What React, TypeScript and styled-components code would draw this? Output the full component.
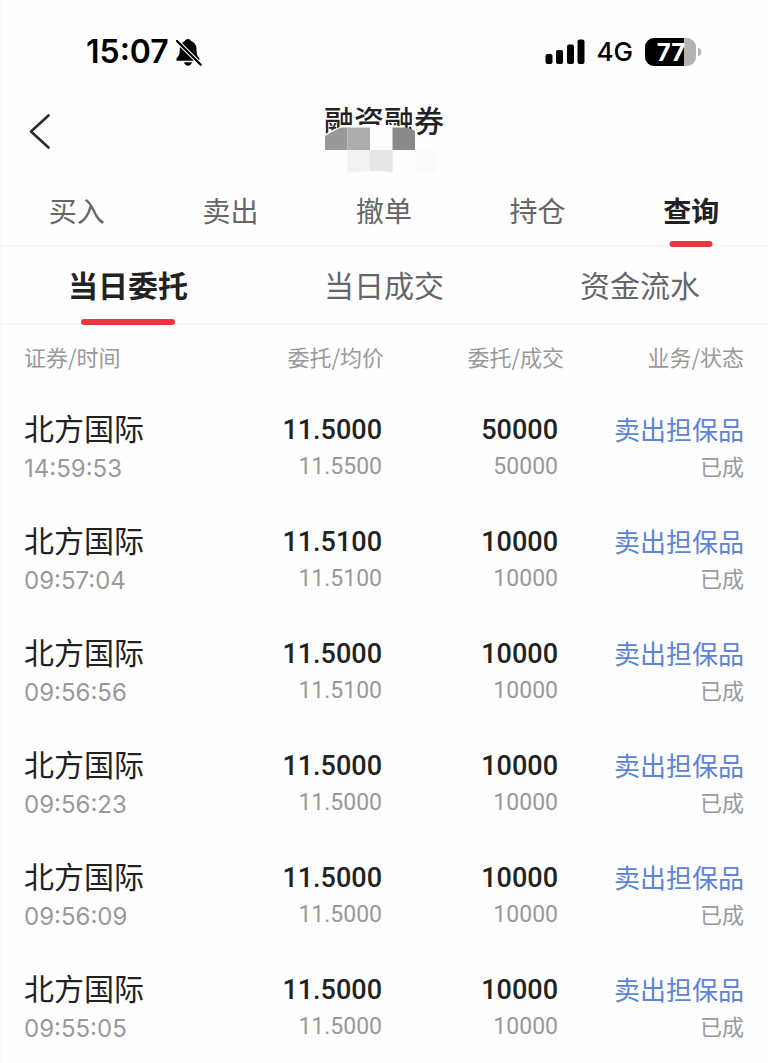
import React from "react";
import styled, { createGlobalStyle } from "styled-components";

const GlobalStyle = createGlobalStyle`
  *, *::before, *::after { box-sizing: border-box; }
  body {
    margin: 0;
    background: #fefefe;
    color: #222;
    font-family: "Noto Sans CJK SC", sans-serif;
  }
`;

const Page = styled.div`
  min-height: 100vh;
  background: #fefefe;
  box-shadow: inset 2px 0 0 #fafafa;
`;

const StatusBar = styled.div`
  display: flex;
  align-items: center;
  justify-content: space-between;
  height: 104px;
  padding: 0 66px 0 86px;
  color: #000;
  font-family: Inter, sans-serif;
`;

const StatusGroup = styled.div<{ $gap: number }>`
  display: flex;
  align-items: center;
  gap: ${({ $gap }) => $gap}px;
`;

const Clock = styled.span`
  font-size: 32px;
  font-weight: 600;
  line-height: 40px;
`;

const Network = styled.span`
  font-size: 26px;
  font-weight: 500;
  line-height: 32px;
`;

const Header = styled.header`
  position: relative;
  display: flex;
  justify-content: center;
  height: 72px;
`;

const BackButton = styled.button`
  position: absolute;
  left: 16px;
  top: 3px;
  display: flex;
  align-items: center;
  justify-content: center;
  width: 48px;
  height: 48px;
  padding: 0;
  border: 0;
  background: none;
  color: #2b2b2b;
  cursor: pointer;
`;

const TitleBox = styled.div`
  position: relative;
  height: 100%;
`;

const Title = styled.h1`
  margin: 0;
  font-size: 30px;
  font-weight: 500;
  line-height: 30px;
`;

const Mosaic = styled.svg`
  position: absolute;
  left: 0;
  top: 16px;
`;

const Tabs = styled.nav<{ $height: number }>`
  display: flex;
  height: ${({ $height }) => $height}px;
  border-bottom: 2px solid #f7f7f7;
`;

const Tab = styled.button<{ $active?: boolean; $size: number; $bar: number }>`
  position: relative;
  flex: 1 1 0;
  padding: 0 0 2px;
  border: 0;
  background: none;
  font-family: inherit;
  font-size: ${({ $size }) => $size}px;
  font-weight: ${({ $active }) => ($active ? 700 : 400)};
  line-height: 40px;
  color: ${({ $active }) => ($active ? "#222" : "#666")};
  cursor: pointer;

  &::after {
    content: "";
    display: ${({ $active }) => ($active ? "block" : "none")};
    position: absolute;
    left: 50%;
    bottom: -2px;
    width: ${({ $bar }) => $bar}px;
    height: 6px;
    border-radius: 3px;
    background: #ea363e;
    transform: translateX(-50%);
  }
`;

const TableWrap = styled.main`
  padding: 0 24px;
`;

const Table = styled.table`
  width: 100%;
  table-layout: fixed;
  border-collapse: collapse;
`;

const HeadCell = styled.th<{ $left?: boolean }>`
  height: 64px;
  padding: 0 0 2px;
  font-size: 22px;
  font-weight: 400;
  line-height: 32px;
  color: #999;
  text-align: ${({ $left }) => ($left ? "left" : "right")};
`;

const Cell = styled.td<{ $left?: boolean; $inset?: number }>`
  height: 112px;
  padding: 17px ${({ $inset = 0 }) => $inset}px 0 0;
  text-align: ${({ $left }) => ($left ? "left" : "right")};
  vertical-align: top;
  white-space: nowrap;
`;

const Name = styled.div`
  font-size: 30px;
  line-height: 42px;
`;

const Time = styled.div`
  font-family: Inter, sans-serif;
  font-size: 24px;
  line-height: 42px;
  color: #999;
`;

const Amount = styled.div`
  font-family: Roboto, sans-serif;
  font-size: 27px;
  font-weight: 500;
  line-height: 48px;
`;

const SubAmount = styled.div`
  font-family: Roboto, sans-serif;
  font-size: 23px;
  line-height: 26px;
  color: #999;
`;

const Business = styled.div`
  font-size: 26px;
  line-height: 46px;
  color: #5b84d8;
`;

const State = styled.div`
  font-size: 22px;
  line-height: 26px;
  color: #999;
`;

const BellOff = () => (
  <svg width="26" height="28" viewBox="0 0 26 28" aria-hidden="true">
    <path
      d="M12 1C13.500 1 14.700 1.900 15 3C18.300 4.200 20.500 7 20.500 10.500C20.500 15.500 21 17.500 23 20C24 21.400 23.300 22.800 21.500 22.800H2C0.300 22.800 -0.200 21.300 0.900 20C3.300 17.300 3.800 15.500 3.800 10.500C3.800 7 5.700 4.200 9 3C9.300 1.900 10.500 1 12 1Z"
      fill="#000"
    />
    <path d="M8 24.200H16C15.400 26.400 14 27.700 12 27.700S8.600 26.400 8 24.200Z" fill="#000" />
    <path d="M0 2L25.500 27.500" stroke="#fefefe" strokeWidth="4.200" />
    <path d="M1 3L24.700 26.700" stroke="#000" strokeWidth="2.200" strokeLinecap="round" />
  </svg>
);

const Signal = () => (
  <svg width="40" height="26" viewBox="0 0 40 26" aria-hidden="true">
    <rect x="0.500" y="15" width="7" height="10" rx="2" />
    <rect x="11" y="11" width="7" height="14" rx="2" />
    <rect x="22" y="5.500" width="7" height="19.500" rx="2" />
    <rect x="32.500" y="0.500" width="7" height="24.500" rx="2" />
  </svg>
);

const Battery = () => (
  <svg width="57" height="28" viewBox="0 0 57 28" role="img" aria-label="77">
    <defs>
      <clipPath id="battery-body">
        <rect width="51" height="28" rx="9" />
      </clipPath>
    </defs>
    <g clipPath="url(#battery-body)">
      <rect width="51" height="28" fill="#b3b3b3" />
      <rect width="39" height="28" fill="#000" />
    </g>
    <path d="M53 10C57.500 11 57.500 17 53 18Z" fill="#b3b3b3" />
    <text
      x="26"
      y="22.500"
      textAnchor="middle"
      fontFamily="Inter, sans-serif"
      fontSize="24"
      fontWeight="700"
      fill="#fff"
    >
      77
    </text>
  </svg>
);

const tabs = ["买入", "卖出", "撤单", "持仓", "查询"];
const subTabs = ["当日委托", "当日成交", "资金流水"];
const columns = ["证券/时间", "委托/均价", "委托/成交", "业务/状态"];

const orders = [
  { time: "14:59:53", price: "11.5000", average: "11.5500", amount: "50000" },
  { time: "09:57:04", price: "11.5100", average: "11.5100", amount: "10000" },
  { time: "09:56:56", price: "11.5000", average: "11.5100", amount: "10000" },
  { time: "09:56:23", price: "11.5000", average: "11.5000", amount: "10000" },
  { time: "09:56:09", price: "11.5000", average: "11.5000", amount: "10000" },
  { time: "09:55:05", price: "11.5000", average: "11.5000", amount: "10000" },
];

export default function App() {
  return (
    <>
      <GlobalStyle />
      <Page>
        <StatusBar>
          <StatusGroup $gap={7}>
            <Clock>15:07</Clock>
            <BellOff />
          </StatusGroup>
          <StatusGroup $gap={12}>
            <Signal />
            <Network>4G</Network>
            <Battery />
          </StatusGroup>
        </StatusBar>

        <Header>
          <BackButton aria-label="返回">
            <svg width="24" height="38" viewBox="0 0 24 38" fill="none" aria-hidden="true">
              <path
                d="M20.500 3.500L3 19.500L20.500 35.500"
                stroke="currentColor"
                strokeWidth="2.600"
                strokeLinecap="round"
                strokeLinejoin="round"
              />
            </svg>
          </BackButton>
          <TitleBox>
            <Title>融资融券</Title>
            <Mosaic width="120" height="56" viewBox="0 0 120 56" aria-hidden="true">
              <path
                d="M0 15C8 10 14 7 22 5H68C78 6 86 9 92 12V30H0Z"
                fill="#fefefe"
              />
              <path d="M1 16C6 13 11 10 17 7.500H23.500V30H1Z" fill="#999" />
              <rect x="23.500" y="7.500" width="22.500" height="22.500" fill="#adadad" />
              <path d="M68.500 7.500H81C85 8 88 9 91 11V30H68.500Z" fill="#8a8a8a" />
              <path d="M23.500 30H46V51C38 51 30 52 23.500 53Z" fill="#f2f2f2" />
              <path d="M46 30H68.500V53C61 51 53 51 46 51Z" fill="#e6e6e6" />
              <rect x="91" y="30" width="22" height="23" fill="#fbfbfb" />
            </Mosaic>
          </TitleBox>
        </Header>

        <Tabs $height={71}>
          {tabs.map((label) => (
            <Tab key={label} $size={28} $bar={43} $active={label === "查询"}>
              {label}
            </Tab>
          ))}
        </Tabs>
        <Tabs $height={78}>
          {subTabs.map((label) => (
            <Tab key={label} $size={30} $bar={94} $active={label === "当日委托"}>
              {label}
            </Tab>
          ))}
        </Tabs>

        <TableWrap>
          <Table>
            <thead>
              <tr>
                {columns.map((label, index) => (
                  <HeadCell key={label} scope="col" $left={index === 0}>
                    {label}
                  </HeadCell>
                ))}
              </tr>
            </thead>
            <tbody>
              {orders.map((order) => (
                <tr key={order.time}>
                  <Cell $left>
                    <Name>北方国际</Name>
                    <Time>{order.time}</Time>
                  </Cell>
                  <Cell $inset={2}>
                    <Amount>{order.price}</Amount>
                    <SubAmount>{order.average}</SubAmount>
                  </Cell>
                  <Cell $inset={6}>
                    <Amount>{order.amount}</Amount>
                    <SubAmount>{order.amount}</SubAmount>
                  </Cell>
                  <Cell>
                    <Business>卖出担保品</Business>
                    <State>已成</State>
                  </Cell>
                </tr>
              ))}
            </tbody>
          </Table>
        </TableWrap>
      </Page>
    </>
  );
}
